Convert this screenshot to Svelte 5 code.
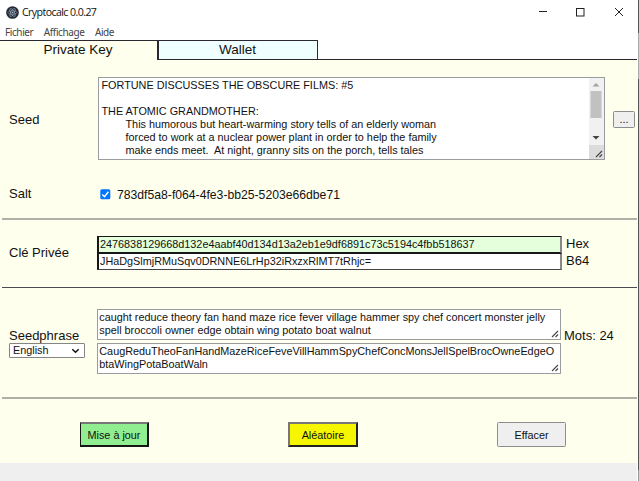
<script>
  const seedLines = [
    'FORTUNE DISCUSSES THE OBSCURE FILMS: #5',
    '',
    'THE ATOMIC GRANDMOTHER:',
    '\tThis humorous but heart-warming story tells of an elderly woman',
    '\tforced to work at a nuclear power plant in order to help the family',
    '\tmake ends meet.  At night, granny sits on the porch, tells tales'
  ];
  const words = [
    'caught reduce theory fan hand maze rice fever village hammer spy chef concert monster jelly',
    'spell broccoli owner edge obtain wing potato boat walnut'
  ];
  const short = [
    'CaugReduTheoFanHandMazeRiceFeveVillHammSpyChefConcMonsJellSpelBrocOwneEdgeO',
    'btaWingPotaBoatWaln'
  ];
</script>

{#snippet grip()}
  <svg class="grip" width="8" height="8" viewBox="0 0 8 8"><path d="M1 7L7 1M4.5 7L7 4.5" stroke="#444" stroke-width="1.1" fill="none" /></svg>
{/snippet}

<div class="window">
  <div class="main">
    <header>
      <svg width="13" height="13" viewBox="0 0 26 26">
        <circle cx="13" cy="13" r="12.7" fill="#252a35" />
        <g fill="none" stroke="#8fa3b5" stroke-width="1.3">
          <ellipse cx="13" cy="13" rx="9" ry="3.5" />
          <ellipse cx="13" cy="13" rx="9" ry="3.5" transform="rotate(60 13 13)" />
          <ellipse cx="13" cy="13" rx="9" ry="3.5" transform="rotate(120 13 13)" />
        </g>
        <circle cx="13" cy="13" r="1.5" fill="#a9bccb" />
      </svg>
      <span class="title">Cryptocalc 0.0.27</span>
      <svg class="controls" width="84" height="10" viewBox="0 0 84 10" fill="none" stroke="#222" stroke-width="1">
        <path d="M0 4.5H8" />
        <rect x="37.5" y="1.5" width="7.5" height="7.5" />
        <path d="M76 1L84 9M84 1L76 9" />
      </svg>
    </header>
    <nav class="menu"><span>Fichier</span><span>Affichage</span><span>Aide</span></nav>
    <div class="tabs">
      <div class="tab active"><span>Private Key</span></div>
      <div class="tab idle"><span>Wallet</span></div>
      <div class="rest"></div>
    </div>
    <main>
      <section class="seed">
        <span class="label">Seed</span>
        <div class="area big">
          <div class="lines">
            {#each seedLines as line}<div>{line}</div>{/each}
          </div>
          <div class="scroll">
            <svg width="14" height="67" viewBox="0 0 14 67">
              <path d="M3.5 8.5L7 5L10.5 8.5Z" fill="#a3a3a3" />
              <rect x="1.5" y="13" width="11" height="27" fill="#c1c1c1" />
              <path d="M3.5 58L7 61.5L10.5 58Z" fill="#444" />
            </svg>
            <div class="corner">{@render grip()}</div>
          </div>
        </div>
        <button class="more">...</button>
      </section>
      <section class="salt">
        <span class="label">Salt</span>
        <svg width="11" height="11" viewBox="0 0 11 11"><rect x=".3" y=".3" width="10" height="10" rx="1.5" fill="#0075ff" /><path d="M2.3 5.5L4.5 7.7L8.4 2.8" fill="none" stroke="#fff" stroke-width="1.5" /></svg>
        <span class="uuid">783df5a8-f064-4fe3-bb25-5203e66dbe71</span>
      </section>
      <hr class="soft" />
      <section class="key">
        <span class="label">Clé Privée</span>
        <div class="fields">
          <div class="field hex">2476838129668d132e4aabf40d134d13a2eb1e9df6891c73c5194c4fbb518637</div>
          <div class="field b64">JHaDgSlmjRMuSqv0DRNNE6LrHp32iRxzxRlMT7tRhjc=</div>
        </div>
        <div class="formats"><span>Hex</span><span>B64</span></div>
      </section>
      <hr />
      <section class="phrase">
        <div class="left">
          <span>Seedphrase</span>
          <div class="select"><span>English</span><svg width="9" height="6" viewBox="0 0 9 6"><path d="M1.3 1.3L4.5 4.3L7.7 1.3" fill="none" stroke="#111" stroke-width="1.5" /></svg></div>
        </div>
        <div class="areas">
          <div class="area w">{#each words as line}<div>{line}</div>{/each}{@render grip()}</div>
          <div class="area s">{#each short as line}<div>{line}</div>{/each}{@render grip()}</div>
        </div>
        <span class="count">Mots: 24</span>
      </section>
      <hr class="soft" />
      <section class="actions">
        <button class="update">Mise à jour</button>
        <button class="random">Aléatoire</button>
        <button class="clear">Effacer</button>
      </section>
    </main>
    <footer></footer>
  </div>
  <div class="edge"></div>
</div>

<style>
  :global(body) { margin: 0; background: #fff; overflow: hidden; }
  .window { width: 639px; height: 481px; display: flex; font-family: "Liberation Sans", Arial, sans-serif; color: #111; font-size: 10.83px; box-sizing: border-box; }
  .window * { box-sizing: border-box; }
  .main { width: 637px; height: 481px; display: flex; flex-direction: column; }
  .edge { width: 1px; margin-left: 1px; height: 481px; background: linear-gradient(#555 0 33px, #aaa 33px 79px, #555 79px 470px, #999 470px); }
  header { height: 24px; flex: none; display: flex; align-items: center; padding-left: 6px; background: #fff; }
  .title { font: 10.6px "Open Sans", "Noto Sans", sans-serif; margin-left: 3px; letter-spacing: -.58px; color: #111; }
  .controls { margin-left: auto; margin-right: 14px; }
  .menu { height: 16px; flex: none; display: flex; gap: 10.5px; padding-left: 5px; font: 10px/17px "Noto Sans", sans-serif; letter-spacing: -.4px; color: #444; }
  .tabs { height: 20px; flex: none; display: flex; font-size: 13.5px; line-height: 18px; text-align: center; color: #111; }
  .tab.active { width: 157px; padding-right: 1px; background: #ffffee; border-top: 1px solid #2a2730; }
  .tab.idle { width: 161px; padding-right: 1px; background: #efffff; border: 1px solid #2a2730; border-left-width: 2px; line-height: 17px; }
  .rest { width: 319px; border-bottom: 1px solid #2a2730; }
  main { height: 403px; flex: none; background: #ffffee; }
  hr { margin: 0 0 0 2px; height: 1px; border: 0; background: #4b4b53; }
  hr.soft { height: 2px; background: #b0b0a6; }
  section { display: flex; }
  .label { width: 90px; padding-left: 9px; font-size: 13px; }
  .seed { height: 99px; padding-top: 17px; }
  .seed .label, .seed .more { align-self: center; }
  .seed .label { width: 98px; margin-top: 2px; }
  .area { position: relative; background: #fff; border: 1px solid #999da0; line-height: 13px; white-space: pre; }
  .big { width: 507px; height: 83px; display: flex; tab-size: 24px; }
  .big .lines { flex: 1; padding: 1px 0 0 2.5px; }
  .lines div { height: 13px; }
  .scroll { width: 15px; background: #f1f1f1; white-space: normal; }
  .scroll svg { display: block; }
  .corner { position: relative; height: 14px; background: #dcdcdc; }
  .grip { position: absolute; right: 1px; bottom: 1px; }
  button { font: 10.83px "Liberation Sans", Arial, sans-serif; color: #111; background: #efefef; border: 1px solid #8c8c8c; border-radius: 1.5px; padding: 0; }
  .more { width: 22px; height: 17px; margin-left: 8px; margin-top: 3px; line-height: 13px; }
  .salt { height: 59px; align-items: center; padding-top: 11px; }
  .salt .label { width: 100px; padding-bottom: 1px; }
  .uuid { font-size: 12.2px; margin-left: 6px; padding-top: 1px; }
  .key { height: 67px; padding-top: 16px; }
  .key .label { width: 97px; line-height: 33px; }
  .field { width: 465px; height: 18px; padding-left: 1px; line-height: 15px; border: 2px solid #171717; border-right-color: #888; border-top-width: 1px; background: #fff; white-space: pre; }
  .field.hex { background: #e5ffdc; height: 18px; }
  .field.b64 { border-top-width: 0; border-bottom: 1px solid #444; height: 16px; }
  .formats { display: flex; flex-direction: column; margin-left: 4px; font-size: 13px; line-height: 17px; margin-top: -1px; }
  .phrase { height: 109px; padding-top: 21px; }
  .left { width: 97px; padding: 19px 0 0 9px; font-size: 13px; line-height: 15px; }
  .select { width: 76px; height: 15px; border: 1px solid #858585; border-radius: 1px; background: #fff; display: flex; align-items: center; justify-content: space-between; padding: 0 4px 0 3px; font-size: 10.83px; line-height: 13px; }
  .areas { display: flex; flex-direction: column; gap: 3px; }
  .areas .area { width: 464px; height: 31px; padding: 1px 0 0 1.3px; }
  .count { font-size: 13px; margin-left: 3px; padding-top: 19px; }
  .actions { padding: 23px 0 0 80px; }
  .actions button { width: 69px; height: 25px; }
  .actions .update { background: #90ee90; border: 2px solid #151515; border-top-color: #777; border-left-width: 1px; border-radius: 0; }
  .actions .random { background: #f6f600; border: 2px solid #222; border-left-color: #777; border-top-color: #777; border-radius: 0; margin-left: 139px; width: 70px; }
  .actions .clear { margin-left: 139px; width: 69px; }
  footer { flex: 1; background: #efefef; }
</style>
